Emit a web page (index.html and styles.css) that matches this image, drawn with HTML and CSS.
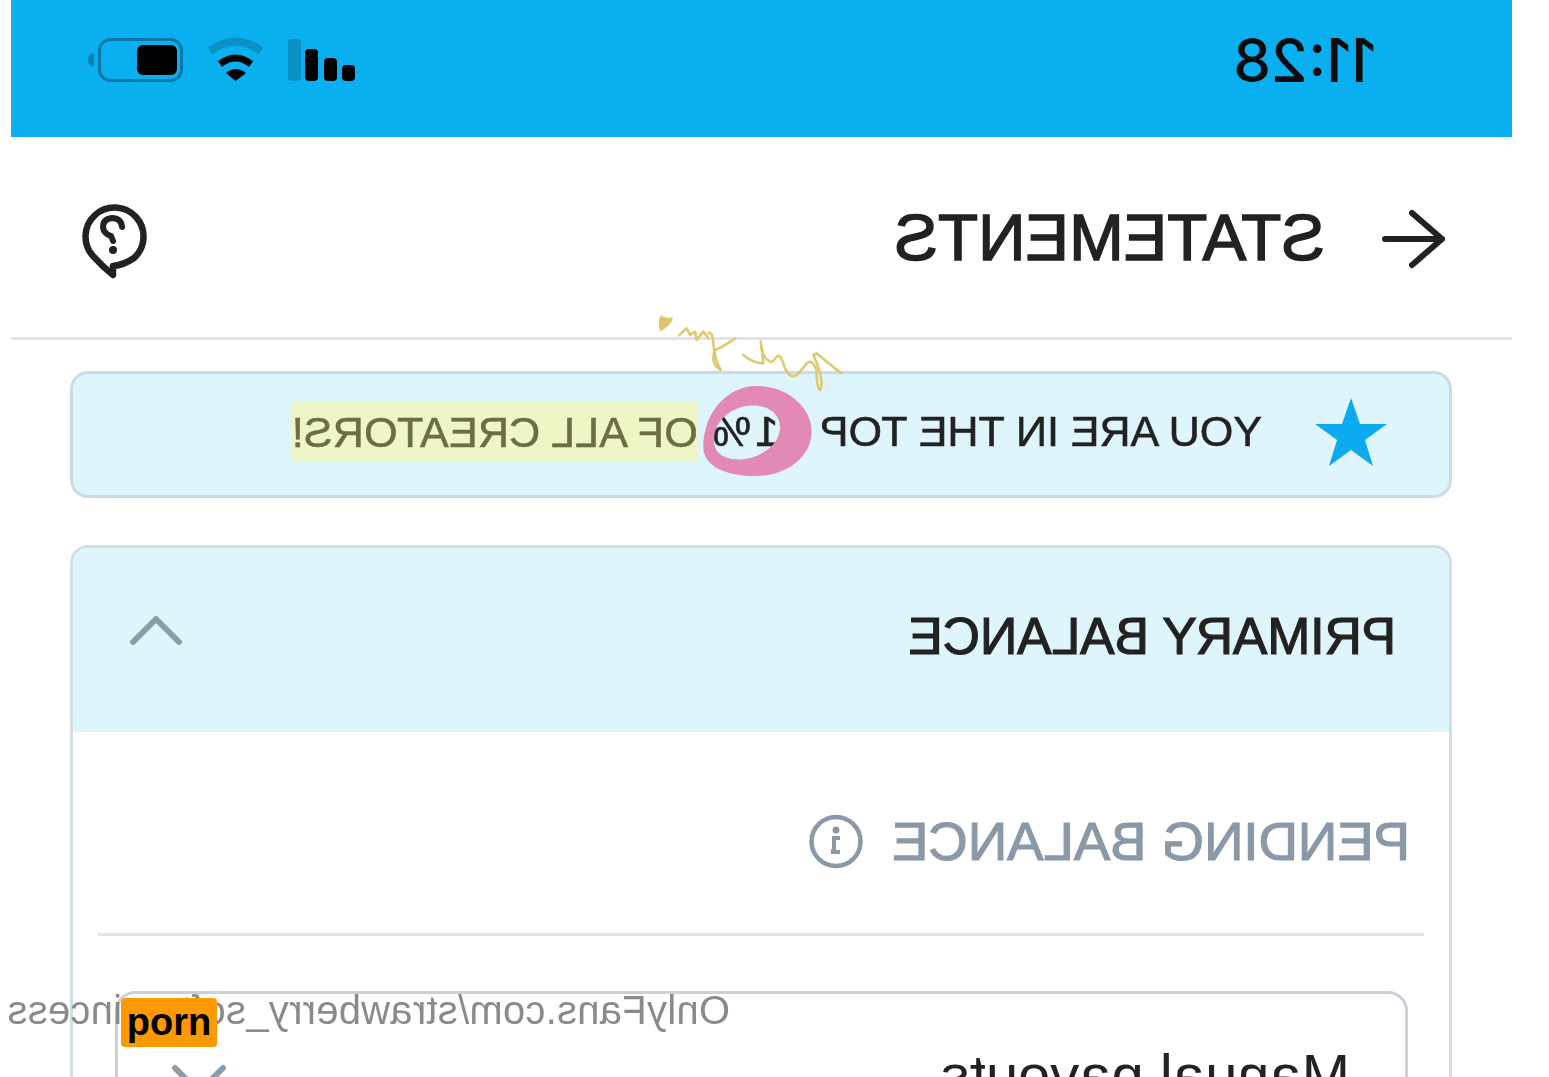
FILE: index.html
```html
<!DOCTYPE html>
<html lang="en">

<head>
    <meta charset="UTF-8">
    <meta name="viewport" content="width=device-width, initial-scale=1.0">
    <title>Statements</title>
    <link rel="stylesheet" href="styles.css">
</head>

<body>
    <!-- the whole capture is mirrored, so the page is laid out normally and flipped -->
    <main class="page">
        <div class="status-bar">
            <span class="time">11:28</span>
            <div class="status-icons">
                <svg class="icon-signal" viewBox="0 0 67 42">
                    <rect x="0" y="26" width="13" height="16" rx="4" fill="#000"/>
                    <rect x="18" y="19" width="13" height="23" rx="4" fill="#000"/>
                    <rect x="37" y="10" width="13" height="32" rx="4" fill="#000"/>
                    <rect x="54" y="0" width="13" height="42" rx="4" fill="#0b90c4"/>
                </svg>
                <svg class="icon-wifi" viewBox="0 0 57 43">
                    <path d="M3 13 Q28.500 -6 54 13" fill="none" stroke="#0b90c4" stroke-width="8"/>
                    <path d="M13 26 Q28.500 14 44 26" fill="none" stroke="#000" stroke-width="7"/>
                    <path d="M18 35 Q28.500 27 38 35 L28.500 43 Z" fill="#000"/>
                </svg>
                <svg class="icon-battery" viewBox="0 0 95 44">
                    <rect x="1.500" y="1.500" width="82" height="41" rx="11" fill="none" stroke="#0a78a8" stroke-width="3"/>
                    <rect x="6" y="7" width="40" height="30" rx="6" fill="#000"/>
                    <path d="M89 15 Q95 16 95 22 Q95 28 89 29 Z" fill="#0a80b0"/>
                </svg>
            </div>
        </div>

        <header class="top-bar">
            <div class="top-left">
                <svg class="icon-back" viewBox="0 0 61 58">
                    <path d="M60 29 H3 M33 3 L3 29 L33 55" fill="none" stroke="#222" stroke-width="6" stroke-linecap="round" stroke-linejoin="round"/>
                </svg>
                <h1 class="title">STATEMENTS</h1>
            </div>
            <svg class="icon-help" viewBox="0 0 66 75">
                <path d="M33 72 L33 63 Q22 62 12 55 A29 29 0 1 1 53 53 Q43 64 33 72 Z" fill="none" stroke="#222" stroke-width="6.500" stroke-linejoin="round"/>
                <path d="M24 24 Q25 15 34 15 Q43 16 43 24 Q43 30 35 33 L33 38" fill="none" stroke="#222" stroke-width="6" stroke-linecap="round"/>
                <circle cx="33" cy="47" r="4" fill="#222"/>
            </svg>
        </header>

        <div class="top-banner">
            <svg class="icon-star" viewBox="0 0 72 68">
                <polygon points="36,0 45,26 72,26 50,42 58,68 36,52 14,68 22,42 0,26 27,26" fill="#0cabef"/>
            </svg>
            <span>YOU ARE IN THE TOP</span>
            <span class="percent">1%</span>
            <span class="highlight">OF ALL CREATORS!</span>
        </div>

        <section class="card">
            <div class="card-head">
                <h2 class="card-title">PRIMARY BALANCE</h2>
                <svg class="icon-chevron" viewBox="0 0 52 30">
                    <polyline points="3,27 26,4 49,27" fill="none" stroke="#8b9cab" stroke-width="6" stroke-linecap="round" stroke-linejoin="round"/>
                </svg>
            </div>
            <div class="pending">
                <span>PENDING BALANCE</span>
                <svg class="icon-info" viewBox="0 0 54 55">
                    <circle cx="27" cy="27.500" r="24.500" fill="none" stroke="#8a99a8" stroke-width="4.500"/>
                    <circle cx="27" cy="16" r="3.500" fill="#8a99a8"/>
                    <path d="M23 24 H29 V37 H32 M23 38 H32" fill="none" stroke="#8a99a8" stroke-width="4"/>
                </svg>
            </div>
            <div class="card-line"></div>
            <div class="payout-select">
                <span>Manual payouts</span>
                <svg class="icon-chevron-down" viewBox="0 0 54 30">
                    <polyline points="3,3 27,27 51,3" fill="none" stroke="#8b9cab" stroke-width="6" stroke-linecap="round" stroke-linejoin="round"/>
                </svg>
            </div>
        </section>

        <div class="watermark">OnlyFans.com/strawberry_soft_princess</div>
    </main>

    <!-- hand drawn bits on top of the capture -->
    <svg class="scribble" viewBox="0 0 780 570">
        <path fill="#e289b4" fill-rule="evenodd" d="M350 258 C440 258 515 320 515 395 C515 470 440 528 345 528 C260 528 190 500 190 440 C190 340 260 258 350 258 Z M320 318 C380 310 422 340 420 385 C418 440 350 482 290 478 C240 475 218 450 222 410 C226 365 270 325 320 318 Z"/>
        <path fill="#dcc66c" d="M62 45 Q78 58 98 52 Q100 72 60 95 Q52 65 62 45 Z"/>
        <g fill="none" stroke="#dfca72" stroke-width="8" stroke-linecap="round" stroke-linejoin="round">
            <path d="M118 105 L140 85 L150 105 L165 95 L170 120 L190 95 L205 115"/>
            <path d="M205 100 Q218 92 220 130 Q225 180 242 210 Q210 190 225 150 Q250 140 285 115"/>
            <path d="M310 165 Q340 190 370 190 L362 125 Q370 180 385 180 Q395 195 410 170 Q420 160 430 190 Q445 240 470 225 Q490 205 500 190 Q515 175 530 210 Q530 265 540 270 Q555 240 520 165 L530 160 Q570 195 605 220"/>
        </g>
    </svg>

    <div class="site-badge">porn</div>
</body>

</html>
```

FILE: styles.css
```css
html,
body {
    margin: 0;
    height: 100%;
    background-color: #fff;
    overflow: hidden;
}

body {
    position: relative;
    font-family: "Liberation Sans", Arial, sans-serif;
    color: #222;
}

.page {
    width: 1549px;
    height: 1077px;
    box-sizing: border-box;
    padding: 0 11px 0 37px;
    overflow: hidden;
    transform: scaleX(-1);
}

svg {
    display: block;
    flex: none;
    overflow: visible;
}

/* status bar */
.status-bar {
    height: 137px;
    box-sizing: border-box;
    padding: 0 77px 18px 136px;
    display: flex;
    justify-content: space-between;
    align-items: center;
    background-color: #0aaff0;
}

.time {
    font-family: Inter, "Liberation Sans", sans-serif;
    font-size: 60px;
    font-weight: 500;
    color: #0c0c0c;
}

.status-icons {
    display: flex;
    align-items: center;
    gap: 24px;
}

.icon-signal {
    width: 67px;
    height: 42px;
}

.icon-wifi {
    width: 57px;
    height: 43px;
}

.icon-battery {
    width: 95px;
    height: 44px;
}

/* top bar */
.top-bar {
    height: 203px;
    box-sizing: border-box;
    padding: 0 69px 0 67px;
    display: flex;
    justify-content: space-between;
    align-items: center;
    border-bottom: 3px solid #e0e3e6;
}

.top-left {
    display: flex;
    align-items: center;
    gap: 59px;
}

.icon-back {
    width: 61px;
    height: 58px;
    margin-top: 3px;
}

.title {
    margin: 0;
    font-size: 65.500px;
    font-weight: normal;
    -webkit-text-stroke: 1.500px #222;
}

.icon-help {
    width: 66px;
    height: 75px;
    margin-top: 6px;
}

/* top 1% banner */
.top-banner {
    height: 127px;
    box-sizing: border-box;
    margin: 31px 59px 0 60px;
    padding: 0 0 6px 62px;
    display: flex;
    align-items: center;
    font-size: 43px;
    -webkit-text-stroke: 0.600px #222;
    background-color: #dff5fc;
    border: 3px solid #c9dce6;
    border-radius: 18px;
}

.icon-star {
    width: 72px;
    height: 68px;
    margin-right: 53px;
}

.percent {
    margin-left: 41px;
    letter-spacing: 4px;
}

.highlight {
    margin-left: 11px;
    padding: 7px 0 5px;
    letter-spacing: 0.200px;
    color: #6d6c45;
    -webkit-text-stroke: 0.600px #6d6c45;
    background-color: #eef6c6;
    border-radius: 4px;
}

/* balance card */
.card {
    margin: 47px 59px 0 60px;
    height: 700px;
    border: 3px solid #d3dde4;
    border-radius: 18px;
    overflow: hidden;
}

.card-head {
    height: 184px;
    box-sizing: border-box;
    padding: 0 57px 8px 53px;
    display: flex;
    justify-content: space-between;
    align-items: center;
    background-color: #dff5fc;
}

.card-title {
    margin: 0;
    font-size: 51.500px;
    font-weight: normal;
    -webkit-text-stroke: 1.200px #222;
}

.icon-chevron {
    width: 52px;
    height: 30px;
    margin-bottom: 12px;
}

.pending {
    height: 201px;
    box-sizing: border-box;
    padding: 18px 0 0 39px;
    display: flex;
    align-items: center;
    gap: 29px;
    font-size: 54.500px;
    color: #8a99a8;
    -webkit-text-stroke: 1.200px #8a99a8;
}

.icon-info {
    width: 54px;
    height: 55px;
}

.card-line {
    height: 3px;
    margin: 0 25px;
    background-color: #e0e3e8;
}

.payout-select {
    margin: 55px 42px 0 41px;
    height: 300px;
    box-sizing: border-box;
    padding: 47px 54px 0 55px;
    display: flex;
    justify-content: space-between;
    align-items: flex-start;
    font-size: 58px;
    border: 3px solid #c9d0d7;
    border-radius: 20px;
}

.icon-chevron-down {
    width: 54px;
    height: 30px;
    margin-top: 24px;
}

.watermark {
    position: absolute;
    left: 819px;
    top: 986px;
    font-size: 40px;
    letter-spacing: 0.250px;
    line-height: 48px;
    white-space: nowrap;
    color: #8a8a8a;
}

/* overlays that are not mirrored */
.scribble {
    position: absolute;
    left: 640px;
    top: 300px;
    width: 260px;
    height: 190px;
}

.site-badge {
    position: absolute;
    left: 121px;
    top: 998px;
    width: 96px;
    height: 49px;
    font-size: 38px;
    font-weight: bold;
    line-height: 49px;
    text-align: center;
    color: #000;
    background-color: #ff9900;
    border-radius: 4px;
}
```
